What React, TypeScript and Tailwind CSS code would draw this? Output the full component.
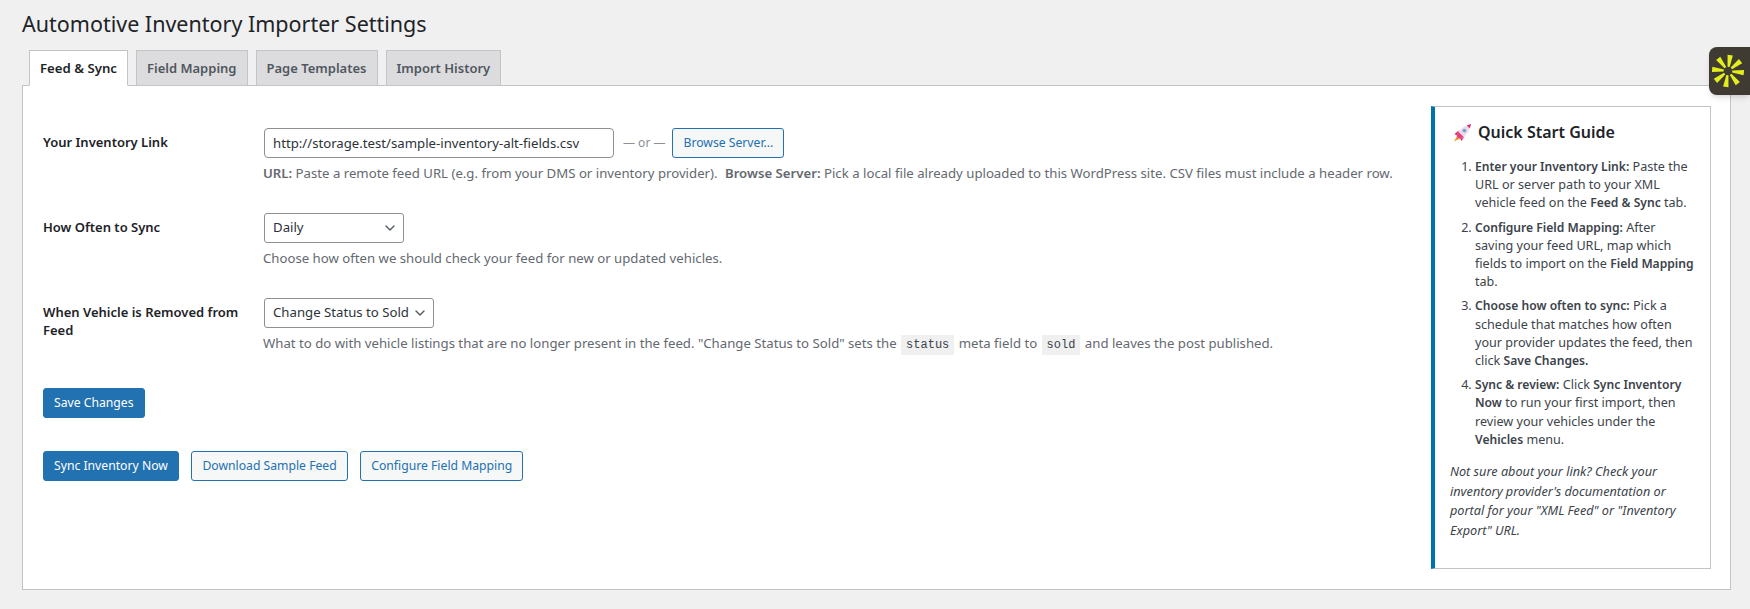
import type { ReactNode } from 'react';
import { ChevronDown } from 'lucide-react';

const FONT = "font-['Noto_Sans',sans-serif]";

function Tab({ label, active = false }: { label: string; active?: boolean }) {
  return (
    <div
      className={`mb-[-1px] flex h-[36px] items-center border border-[#c3c4c7] px-[10px] pt-[1px] font-semibold leading-none ${
        active ? 'border-b-white bg-white text-[13.2px] text-[#1d2327]' : 'bg-[#dcdcde] text-[13px] text-[#50575e]'
      }`}
    >
      {label}
    </div>
  );
}

function Row({ label, children }: { label: string; children: ReactNode }) {
  return (
    <div className="mb-[25px] flex min-h-[60px]">
      <div className="w-[221px] shrink-0 pt-[5px] text-[13px] font-semibold leading-[18px] text-[#1d2327]">
        <div className="w-[200px]">{label}</div>
      </div>
      <div className="min-w-0 flex-1">{children}</div>
    </div>
  );
}

function Select({ value, width }: { value: string; width: string }) {
  return (
    <div
      className={`flex h-[30px] items-center justify-between whitespace-nowrap rounded-[3px] border border-[#8c8f94] bg-white pl-[8px] pr-[5px] text-[13.2px] text-[#2c3338] ${width}`}
    >
      <span>{value}</span>
      <ChevronDown className="h-[16px] w-[16px] text-[#50575e]" strokeWidth={2} />
    </div>
  );
}

function Button({ label, primary = false }: { label: string; primary?: boolean }) {
  return (
    <button
      className={`h-[30px] rounded-[3px] border px-[10px] text-[12.2px] leading-none ${
        primary ? 'border-[#2271b1] bg-[#2271b1] text-white' : 'border-[#2271b1] bg-[#f6f7f7] text-[#2271b1]'
      }`}
    >
      {label}
    </button>
  );
}

function Code({ children }: { children: string }) {
  return (
    <code className="mx-[1px] bg-[#f0f0f1] px-[5px] py-[3px] font-['Liberation_Mono',monospace] text-[12px] text-[#3c434a]">
      {children}
    </code>
  );
}

function Rocket() {
  return (
    <svg viewBox="0 0 20 20" className="ml-[3px] h-[19px] w-[19px] shrink-0">
      <path d="M5 13 1 19.500l6.500-3.500z" fill="#f4900c" />
      <path d="M6 8 1.500 11.500l4 2.500zM12 14l-3 5-2.500-4z" fill="#dd2e74" />
      <path d="M4 14.500C4 9 10 3 19 1c-1 8-7 14.500-12 15.500z" fill="#eadfe8" />
      <path d="M14.500 2.600c1.400-.7 3-1.200 4.500-1.600-.3 1.600-.8 3.100-1.500 4.600z" fill="#dd2e74" />
      <path d="M4 14.500c0-1.700.6-3.500 1.600-5.300l5.300 5c-1.500 1.200-2.800 1.900-3.900 2.300z" fill="#e8407f" />
      <circle cx="12" cy="8" r="2" fill="#7f9fd6" />
    </svg>
  );
}

function Spokes() {
  const angles = [8, 52, 96, 142, 188, 232, 276, 322];
  return (
    <svg viewBox="0 0 32 32" className="h-[34px] w-[34px]">
      {angles.map((a) => (
        <polygon key={a} points="15,12 17,12 18.500,1 13.500,1" fill="#e4ee1f" transform={`rotate(${a} 16 16)`} />
      ))}
    </svg>
  );
}

export default function App() {
  return (
    <div className={`${FONT} relative min-h-[609px] overflow-hidden bg-[#f0f0f1] pb-[20px] pl-[22px] pr-[19px] text-[13.2px] text-[#3c434a]`}>
      <h1 className="h-[50px] pt-[9px] text-[21.5px] font-normal leading-[30px] text-[#1d2327]">
        Automotive Inventory Importer Settings
      </h1>

      <div className="flex gap-[8px] pl-[7px]">
        <Tab label="Feed &amp; Sync" active />
        <Tab label="Field Mapping" />
        <Tab label="Page Templates" />
        <Tab label="Import History" />
      </div>

      <div className="flex border border-[#c3c4c7] bg-white pb-[20px] pl-[20px] pr-[19px] pt-[20px]">
        <div className="min-w-0 flex-1 pt-[22px]">
          <Row label="Your Inventory Link">
            <div className="flex items-center">
              <input
                readOnly
                value="http://storage.test/sample-inventory-alt-fields.csv"
                className="h-[30px] w-[350px] rounded-[4px] border border-[#8c8f94] bg-white px-[8px] text-[13.2px] text-[#2c3338]"
              />
              <span className="ml-[9px] mr-[7px] text-[12px] text-[#8c8f94]">— or —</span>
              <Button label="Browse Server..." />
            </div>
            <p className="ml-[-1px] mt-[6px] whitespace-nowrap leading-[19.5px] text-[#646970]">
              <strong className="font-semibold">URL:</strong> Paste a remote feed URL (e.g. from your DMS or inventory provider).{' '}
              <strong className="ml-[4px] font-semibold">Browse Server:</strong> Pick a local file already uploaded to this WordPress site. CSV files must include a header row.
            </p>
          </Row>

          <Row label="How Often to Sync">
            <Select value="Daily" width="w-[140px]" />
            <p className="ml-[-1px] mt-[6px] leading-[19.5px] text-[#646970]">Choose how often we should check your feed for new or updated vehicles.</p>
          </Row>

          <Row label="When Vehicle is Removed from Feed">
            <Select value="Change Status to Sold" width="w-[170px]" />
            <p className="ml-[-1px] mt-[6px] leading-[19.5px] text-[#646970]">
              What to do with vehicle listings that are no longer present in the feed. "Change Status to Sold" sets the <Code>status</Code> meta field to <Code>sold</Code> and leaves the post published.
            </p>
          </Row>

          <div className="pt-[5px]">
            <Button label="Save Changes" primary />
          </div>
          <div className="mt-[33px] flex gap-[12.5px]">
            <Button label="Sync Inventory Now" primary />
            <Button label="Download Sample Feed" />
            <Button label="Configure Field Mapping" />
          </div>
        </div>

        <aside className="w-[280px] shrink-0 border border-l-4 border-[#c3c4c7] border-l-[#0073aa] px-[15px] pb-[28px] pt-[13px]">
          <h2 className="flex items-center gap-[6px] text-[16px] font-semibold leading-[24px] text-[#1d2327]">
            <Rocket />
            Quick Start Guide
          </h2>
          <ol className="ml-[25px] mt-[14px] list-decimal text-[12.6px] leading-[18.2px]">
            <li className="mb-[6px]">
              <strong className="text-[12.1px] font-semibold">Enter your Inventory Link:</strong> Paste the URL or server path to your XML vehicle feed on the <strong className="text-[12.1px] font-semibold">Feed &amp; Sync</strong> tab.
            </li>
            <li className="mb-[6px]">
              <strong className="text-[12.1px] font-semibold">Configure Field Mapping:</strong> After saving your feed URL, map which fields to import on the <strong className="text-[12.1px] font-semibold">Field Mapping</strong> tab.
            </li>
            <li className="mb-[6px]">
              <strong className="text-[12.1px] font-semibold">Choose how often to sync:</strong> Pick a schedule that matches how often your provider updates the feed, then click <strong className="text-[12.1px] font-semibold">Save Changes.</strong>
            </li>
            <li className="mb-[6px]">
              <strong className="text-[12.1px] font-semibold">Sync &amp; review:</strong> Click <strong className="text-[12.1px] font-semibold">Sync Inventory Now</strong> to run your first import, then review your vehicles under the <strong className="text-[12.1px] font-semibold">Vehicles</strong> menu.
            </li>
          </ol>
          <p className="mt-[13px] text-[12.7px] italic leading-[19.5px]">
            Not sure about your link? Check your inventory provider's documentation or portal for your "XML Feed" or "Inventory Export" URL.
          </p>
        </aside>
      </div>

      {/* floating widget over the page edge */}
      <div className="absolute right-0 top-[47px] flex h-[48px] w-[41px] items-center justify-center rounded-l-[8px] bg-[#3f3b33] pr-[4px] shadow-md">
        <Spokes />
      </div>
    </div>
  );
}
